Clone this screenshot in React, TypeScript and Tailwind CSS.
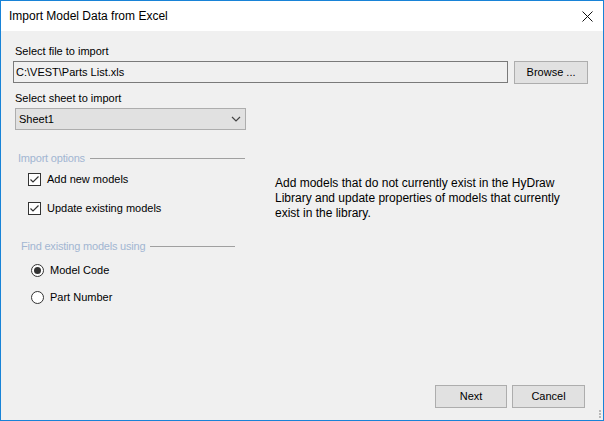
import { useState } from "react";

const ui = { fontFamily: '"Liberation Sans", Arial, sans-serif' };

const CheckBox = ({ label, checked }: { label: string; checked: boolean }) => (
  <div className="flex items-center h-[13px]">
    <div className="w-[13px] h-[13px] border border-[#333333] bg-white flex items-center justify-center">
      {checked && (
        <svg width="11" height="11" viewBox="0 0 11 11">
          <path d="M1.5 5.5 L4 8 L9.5 2.5" fill="none" stroke="#333333" strokeWidth="1.2" />
        </svg>
      )}
    </div>
    <span className="ml-[6px] text-[11px] leading-[13px] text-black">{label}</span>
  </div>
);

const Radio = ({ label, checked }: { label: string; checked: boolean }) => (
  <div className="flex items-center h-[13px]">
    <div className="w-[13px] h-[13px] rounded-full border border-[#333333] bg-white flex items-center justify-center">
      {checked && <div className="w-[7px] h-[7px] rounded-full bg-[#333333]" />}
    </div>
    <span className="ml-[6px] text-[11px] leading-[13px] text-black">{label}</span>
  </div>
);

const GroupHeader = ({ text, width }: { text: string; width: string }) => (
  <div className={`flex items-center ${width}`}>
    <span className="text-[11px] leading-[13px] text-[#a2b6d2] tracking-[-0.2px]">{text}</span>
    <div className="ml-[5px] h-px bg-[#a0a0a0] flex-1" />
  </div>
);

export default function App() {
  const [sheet] = useState("Sheet1");

  return (
    <div className="w-[604px] h-[421px] border border-[#1883d7] bg-[#f0f0f0] flex flex-col" style={ui}>
      {/* TITLE BAR */}
      <div className="h-[30px] bg-white flex items-center justify-between pl-[8px] pr-[10px]">
        <span className="text-[12px] text-black">Import Model Data from Excel</span>
        <svg width="11" height="11" viewBox="0 0 11 11">
          <path d="M0.5 0.5 L10.5 10.5 M10.5 0.5 L0.5 10.5" stroke="#111111" strokeWidth="1" />
        </svg>
      </div>

      {/* BODY */}
      <div className="flex-1 flex flex-col pl-[12px] pr-[15px] relative">
        <div className="mt-[14px] pl-[2px] text-[11px] leading-[13px] text-black">Select file to import</div>
        <div className="mt-[3px] flex items-start">
          <div className="w-[496px] h-[22px] border border-[#7a7a7a] bg-[#f0f0f0] flex items-center pl-[2px] text-[11px] text-black">
            C:\VEST\Parts List.xls
          </div>
          <button className="ml-[6px] w-[74px] h-[23px] border border-[#adadad] bg-[#e1e1e1] text-[11px] text-black">
            Browse ...
          </button>
        </div>

        <div className="mt-[8px] pl-[2px] text-[11px] leading-[13px] text-black">Select sheet to import</div>
        <div className="mt-[3px] ml-[2px] w-[231px] h-[22px] border border-[#adadad] bg-[#e1e1e1] flex items-center justify-between pl-[3px] pr-[4px] text-[11px] text-black">
          <span>{sheet}</span>
          <svg width="10" height="6" viewBox="0 0 10 6">
            <path d="M1 1 L5 5 L9 1" fill="none" stroke="#444444" strokeWidth="1.2" />
          </svg>
        </div>

        <div className="mt-[22px] flex">
          <div className="w-[262px] pl-[5px]">
            <GroupHeader text="Import options" width="w-[227px]" />
            <div className="mt-[8px] pl-[10px] flex flex-col gap-[16px]">
              <CheckBox label="Add new models" checked />
              <CheckBox label="Update existing models" checked />
            </div>
          </div>
          <div className="mt-[24px] text-[12px] leading-[15px] text-black w-[298px]">
            Add models that do not currently exist in the HyDraw Library and update properties of models that currently exist in the library.
          </div>
        </div>

        <div className="mt-[19px] pl-[8px]">
          <GroupHeader text="Find existing models using" width="w-[214px]" />
          <div className="mt-[11px] pl-[10px] flex flex-col gap-[14px]">
            <Radio label="Model Code" checked />
            <Radio label="Part Number" checked={false} />
          </div>
        </div>

        <div className="mt-auto mb-[12px] flex justify-end gap-[5px] pr-[3px]">
          <button className="w-[72px] h-[23px] border border-[#adadad] bg-[#e1e1e1] text-[11px] text-black">Next</button>
          <button className="w-[73px] h-[23px] border border-[#adadad] bg-[#e1e1e1] text-[11px] text-black">Cancel</button>
        </div>

        {/* size grip */}
        <div className="absolute right-[2px] bottom-[2px] flex flex-col gap-[1px]">
          <div className="w-[2px] h-[2px] bg-[#b8b8b8]" />
          <div className="w-[2px] h-[2px] bg-[#b8b8b8]" />
          <div className="w-[2px] h-[2px] bg-[#b8b8b8]" />
        </div>
      </div>
    </div>
  );
}
